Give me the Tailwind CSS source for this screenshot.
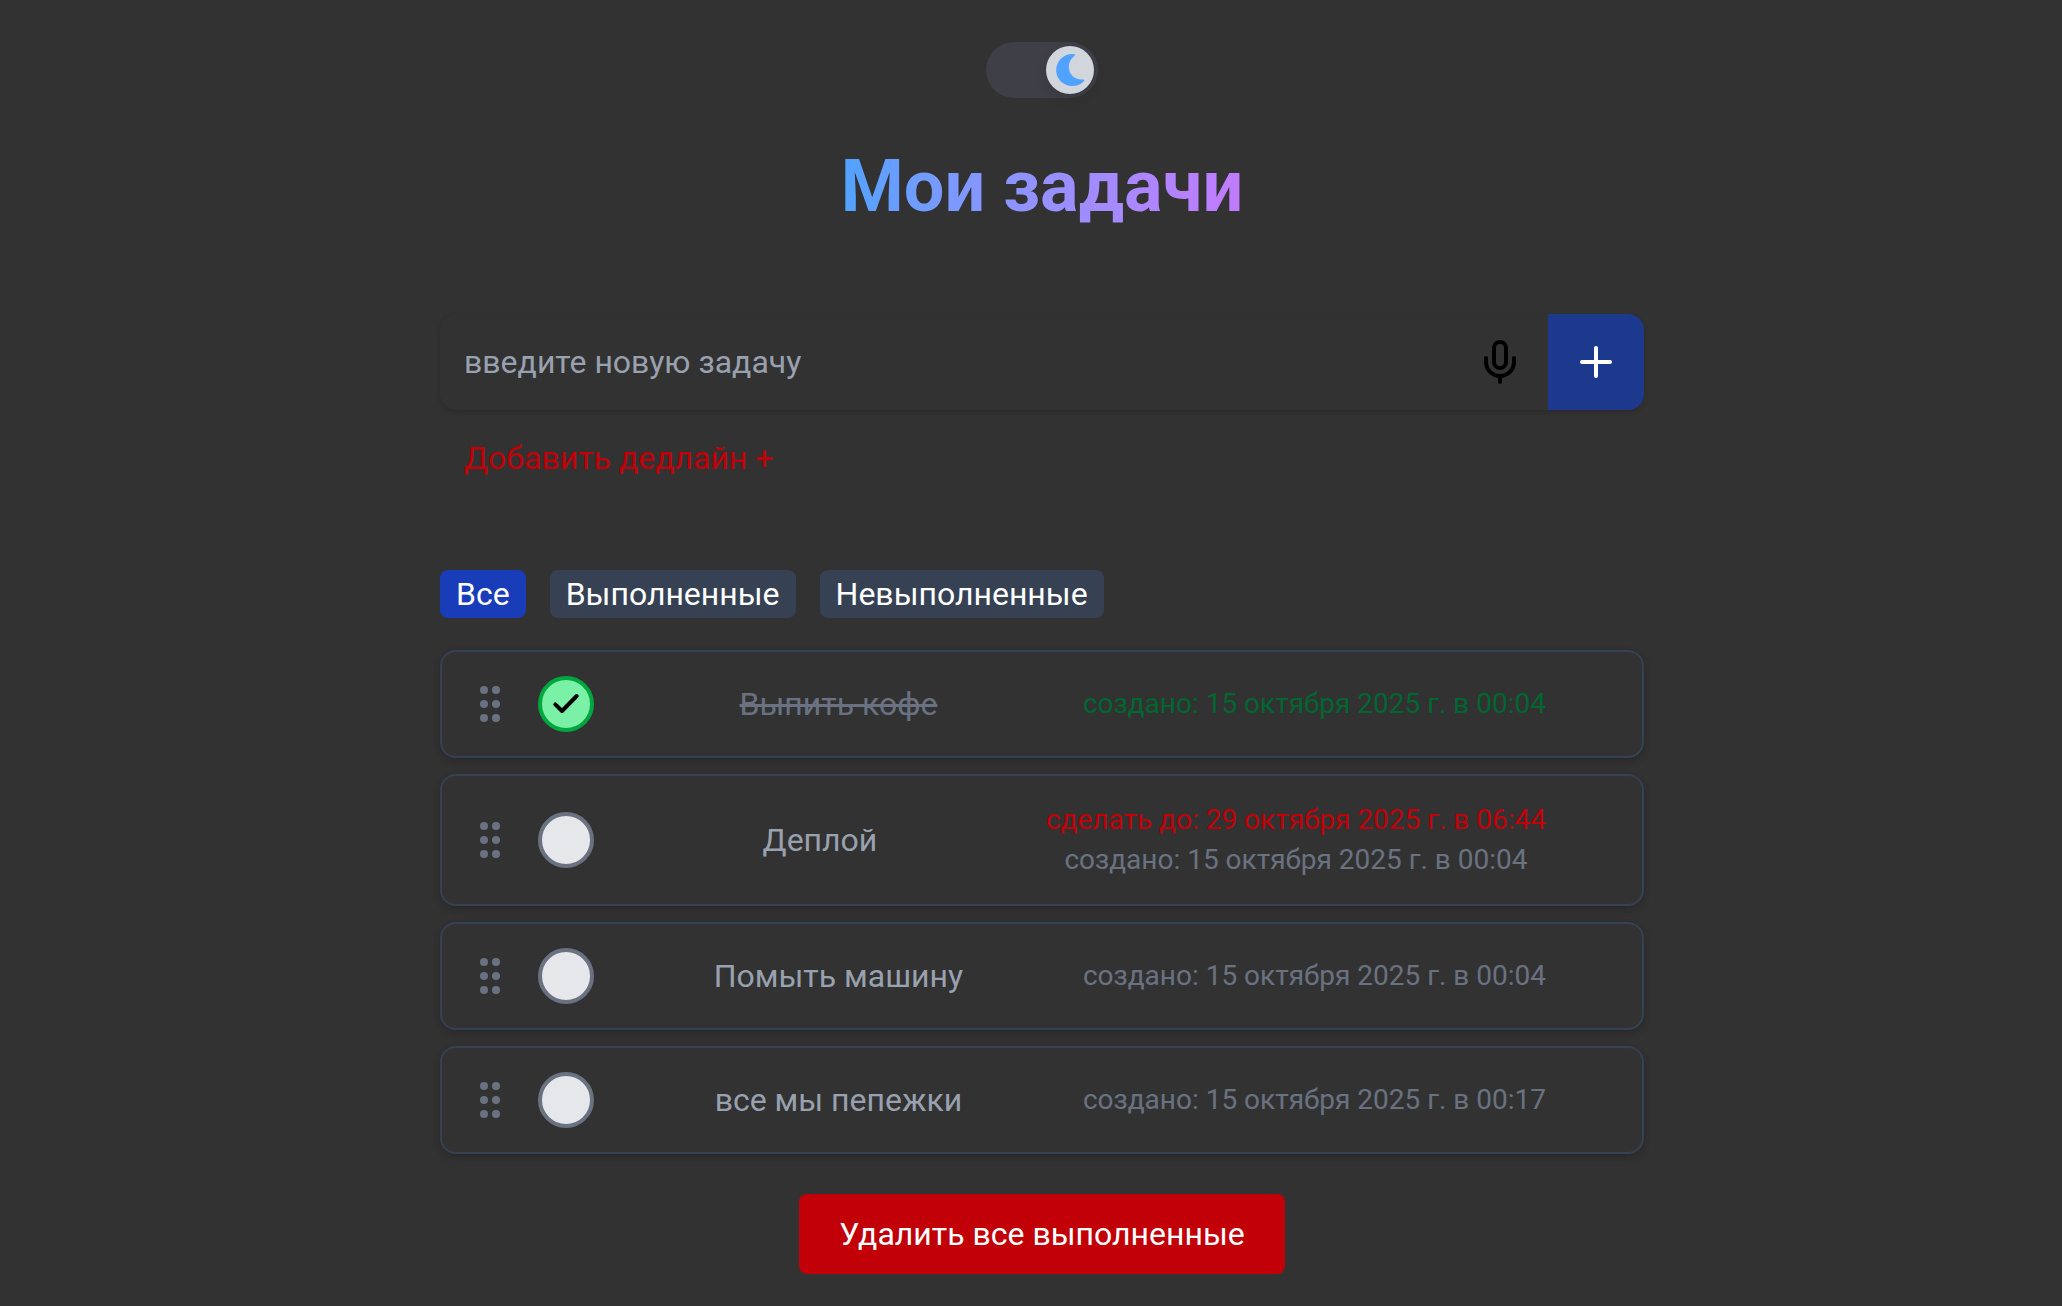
<!DOCTYPE html>
<html lang="ru">
<head>
<meta charset="utf-8">
<meta name="viewport" content="width=device-width, initial-scale=1">
<title>Мои задачи</title>
<script src="https://cdn.jsdelivr.net/npm/@tailwindcss/browser@4"></script>
</head>
<body class="min-h-screen bg-[#323232] font-['Roboto',sans-serif] text-[32px] leading-[48px] text-white">
<svg class="hidden" aria-hidden="true">
  <symbol id="grip" viewBox="0 0 20 36">
    <circle cx="4" cy="4" r="4"/><circle cx="16" cy="4" r="4"/>
    <circle cx="4" cy="18" r="4"/><circle cx="16" cy="18" r="4"/>
    <circle cx="4" cy="32" r="4"/><circle cx="16" cy="32" r="4"/>
  </symbol>
</svg>
<div class="pl-[22px]">
<main class="mx-auto flex max-w-[1204px] flex-col pt-[42px] pb-8">
  <button type="button" role="switch" aria-checked="true" aria-label="Тёмная тема" class="flex h-14 w-28 items-center justify-end self-center rounded-full bg-[#3f3f47] p-1">
    <span class="flex size-12 items-center justify-center rounded-full bg-gray-300 shadow-[0_4px_12px_rgba(0,0,0,0.12)]">
      <svg class="size-8 fill-blue-400" viewBox="-2 0 32 32" aria-hidden="true"><path d="M18.600 0.200C19.400 0.300 19.200 1.200 18.600 1.800C14.500 4.800 12.800 8.800 12.800 13C12.800 20 18.500 25.600 25.500 25.600L27.300 25.400C28.300 25.300 28.500 26.200 28 26.900C25.200 30.200 21 32 16.300 32C7.400 32 0.200 25 0.200 16.200C0.200 7.300 7.400 0 16.300 0Z"/></svg>
    </span>
  </button>

  <h1 class="mt-12 self-center bg-gradient-to-r from-blue-400 to-purple-400 bg-clip-text text-[72px] leading-[82px] font-bold text-transparent">Мои задачи</h1>

  <form class="mt-[86px]">
    <div class="flex h-24 overflow-hidden rounded-2xl shadow-[0_2px_6px_rgba(0,0,0,0.08),0_2px_4px_rgba(0,0,0,0.06)]">
      <input type="text" aria-label="Новая задача" placeholder="введите новую задачу" class="min-w-0 flex-1 bg-transparent px-6 outline-none placeholder:text-gray-400">
      <button type="button" aria-label="Голосовой ввод" class="flex w-24 items-center justify-center">
        <svg class="size-12 fill-none stroke-black stroke-2" viewBox="0 0 24 24" stroke-linecap="round" aria-hidden="true"><rect x="9" y="2" width="6" height="13" rx="3"/><path d="M19 10v2a7 7 0 0 1-14 0v-2M12 19v3"/></svg>
      </button>
      <button type="submit" aria-label="Добавить задачу" class="flex w-24 items-center justify-center bg-blue-900">
        <svg class="size-8 fill-none stroke-white stroke-4" viewBox="0 0 32 32" stroke-linecap="round" aria-hidden="true"><path d="M16 2v28M2 16h28"/></svg>
      </button>
    </div>
    <button type="button" class="mt-6 ml-6 block text-red-700">Добавить дедлайн +</button>
  </form>

  <div class="mt-[88px] flex gap-6">
    <button type="button" class="rounded-lg bg-blue-800 px-4">Все</button>
    <button type="button" class="rounded-lg bg-gray-700 px-4">Выполненные</button>
    <button type="button" class="rounded-lg bg-gray-700 px-4">Невыполненные</button>
  </div>

  <ul class="mt-8 flex flex-col gap-4 text-gray-400">
    <li class="flex items-center rounded-2xl border-2 border-gray-700 py-6 pr-24 pl-[38px] shadow-[0_2px_6px_rgba(0,0,0,0.1),0_4px_8px_rgba(0,0,0,0.1)]">
      <svg class="h-9 w-5 fill-gray-500" aria-hidden="true"><use href="#grip"/></svg>
      <label class="relative ml-[38px] size-14">
        <input type="checkbox" checked aria-label="Выпить кофе" class="block size-14 appearance-none rounded-full border-4 border-green-600 bg-green-300">
        <svg class="pointer-events-none absolute inset-3 size-8 fill-none stroke-black stroke-4" viewBox="0 0 32 32" stroke-linecap="round" stroke-linejoin="round" aria-hidden="true"><path d="M5.300 16.300l6.700 6.700 14.700-15"/></svg>
      </label>
      <span class="flex-1 text-center text-gray-500 line-through decoration-[3px]">Выпить кофе</span>
      <div class="text-center text-[28px] leading-10 text-green-800"><p>создано: 15 октября 2025 г. в 00:04</p></div>
    </li>
    <li class="flex items-center rounded-2xl border-2 border-gray-700 py-6 pr-24 pl-[38px] shadow-[0_2px_6px_rgba(0,0,0,0.1),0_4px_8px_rgba(0,0,0,0.1)]">
      <svg class="h-9 w-5 fill-gray-500" aria-hidden="true"><use href="#grip"/></svg>
      <input type="checkbox" aria-label="Деплой" class="ml-[38px] block size-14 appearance-none rounded-full border-4 border-gray-500 bg-gray-200">
      <span class="flex-1 text-center">Деплой</span>
      <div class="text-center text-[28px] leading-10 text-gray-500"><p class="text-red-700">сделать до: 29 октября 2025 г. в 06:44</p><p>создано: 15 октября 2025 г. в 00:04</p></div>
    </li>
    <li class="flex items-center rounded-2xl border-2 border-gray-700 py-6 pr-24 pl-[38px] shadow-[0_2px_6px_rgba(0,0,0,0.1),0_4px_8px_rgba(0,0,0,0.1)]">
      <svg class="h-9 w-5 fill-gray-500" aria-hidden="true"><use href="#grip"/></svg>
      <input type="checkbox" aria-label="Помыть машину" class="ml-[38px] block size-14 appearance-none rounded-full border-4 border-gray-500 bg-gray-200">
      <span class="flex-1 text-center">Помыть машину</span>
      <div class="text-center text-[28px] leading-10 text-gray-500"><p>создано: 15 октября 2025 г. в 00:04</p></div>
    </li>
    <li class="flex items-center rounded-2xl border-2 border-gray-700 py-6 pr-24 pl-[38px] shadow-[0_2px_6px_rgba(0,0,0,0.1),0_4px_8px_rgba(0,0,0,0.1)]">
      <svg class="h-9 w-5 fill-gray-500" aria-hidden="true"><use href="#grip"/></svg>
      <input type="checkbox" aria-label="все мы пепежки" class="ml-[38px] block size-14 appearance-none rounded-full border-4 border-gray-500 bg-gray-200">
      <span class="flex-1 text-center">все мы пепежки</span>
      <div class="text-center text-[28px] leading-10 text-gray-500"><p>создано: 15 октября 2025 г. в 00:17</p></div>
    </li>
  </ul>

  <button type="button" class="mt-10 self-center rounded-lg bg-red-700 px-10 py-4">Удалить все выполненные</button>
</main>
</div>
</body>
</html>
